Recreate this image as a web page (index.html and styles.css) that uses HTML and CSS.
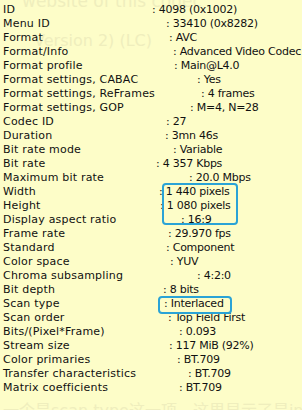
FILE: index.html
```html
<!DOCTYPE html>
<html>
<head>
<meta charset="utf-8">
<link rel="stylesheet" href="styles.css">
</head>
<body>
<div class="panel">
  <div class="ghost ghost-top">website of this codec</div>
  <div class="ghost ghost-ver">Version 2) (LC)</div>
  <div class="ghost ghost-cn">一个是scan type这一项，这里显示了是interlaced</div>
  <div class="rows">
    <div class="row"><span class="k">ID</span><span class="v" style="--x:1px">: 4098 (0x1002)</span></div>
    <div class="row"><span class="k">Menu ID</span><span class="v" style="--x:15px">: 33410 (0x8282)</span></div>
    <div class="row"><span class="k">Format</span><span class="v" style="--x:18px">: AVC</span></div>
    <div class="row"><span class="k">Format/Info</span><span class="v" style="--x:22px">: Advanced Video Codec</span></div>
    <div class="row"><span class="k">Format profile</span><span class="v" style="--x:23px">: Main@L4.0</span></div>
    <div class="row"><span class="k">Format settings, CABAC</span><span class="v" style="--x:46px">: Yes</span></div>
    <div class="row"><span class="k">Format settings, ReFrames</span><span class="v" style="--x:50px">: 4 frames</span></div>
    <div class="row"><span class="k">Format settings, GOP</span><span class="v" style="--x:39px">: M=4, N=28</span></div>
    <div class="row"><span class="k">Codec ID</span><span class="v" style="--x:15px">: 27</span></div>
    <div class="row"><span class="k">Duration</span><span class="v" style="--x:14px">: 3mn 46s</span></div>
    <div class="row"><span class="k">Bit rate mode</span><span class="v" style="--x:22px">: Variable</span></div>
    <div class="row"><span class="k">Bit rate</span><span class="v" style="--x:5px">: 4 357 Kbps</span></div>
    <div class="row"><span class="k">Maximum bit rate</span><span class="v" style="--x:38px">: 20.0 Mbps</span></div>
    <div class="row"><span class="k">Width</span><span class="v" style="--x:8px">: 1 440 pixels</span></div>
    <div class="row"><span class="k">Height</span><span class="v" style="--x:9px">: 1 080 pixels</span></div>
    <div class="row"><span class="k">Display aspect ratio</span><span class="v" style="--x:30px">: 16:9</span></div>
    <div class="row"><span class="k">Frame rate</span><span class="v" style="--x:17px">: 29.970 fps</span></div>
    <div class="row"><span class="k">Standard</span><span class="v" style="--x:15px">: Component</span></div>
    <div class="row"><span class="k">Color space</span><span class="v" style="--x:19px">: YUV</span></div>
    <div class="row"><span class="k">Chroma subsampling</span><span class="v" style="--x:46px">: 4:2:0</span></div>
    <div class="row"><span class="k">Bit depth</span><span class="v" style="--x:12px">: 8 bits</span></div>
    <div class="row"><span class="k">Scan type</span><span class="v" style="--x:13px">: Interlaced</span></div>
    <div class="row"><span class="k">Scan order</span><span class="v" style="--x:17px">: Top Field First</span></div>
    <div class="row"><span class="k">Bits/(Pixel*Frame)</span><span class="v" style="--x:28px">: 0.093</span></div>
    <div class="row"><span class="k">Stream size</span><span class="v" style="--x:18px">: 117 MiB (92%)</span></div>
    <div class="row"><span class="k">Color primaries</span><span class="v" style="--x:26px">: BT.709</span></div>
    <div class="row"><span class="k">Transfer characteristics</span><span class="v" style="--x:37px">: BT.709</span></div>
    <div class="row"><span class="k">Matrix coefficients</span><span class="v" style="--x:28px">: BT.709</span></div>
  </div>
  <div class="hl hl-size"></div>
  <div class="hl hl-scan"></div>
</div>
</body>
</html>
```

FILE: styles.css
```css
html, body {
  margin: 0;
  padding: 0;
}
body {
  width: 302px;
  height: 410px;
  overflow: hidden;
  background: #fdfdc8;
}
.panel {
  position: relative;
  width: 302px;
  height: 410px;
  overflow: hidden;
  font-family: "DejaVu Sans", sans-serif;
  font-size: 11px;
  color: #111;
}
.rows {
  position: relative;
  z-index: 1;
  padding: 3px 0 0 3px;
  display: flex;
  flex-direction: column;
}
.row {
  display: flex;
  height: 14px;
  line-height: 14px;
  white-space: nowrap;
}
.k {
  width: 148px;
  flex: none;
  letter-spacing: 0.2px;
}
.v {
  padding-left: var(--x);
  letter-spacing: -0.25px;
}
.hl {
  position: absolute;
  z-index: 2;
  border: 2.5px solid #2aa3d6;
  border-radius: 4px;
  box-sizing: border-box;
}
.hl-size {
  left: 162px;
  top: 183px;
  width: 76px;
  height: 42px;
}
.hl-scan {
  left: 158px;
  top: 296px;
  width: 74px;
  height: 18px;
}
.ghost {
  position: absolute;
  color: #efeebd;
  white-space: nowrap;
}
.ghost-top {
  left: 22px;
  top: -9px;
  font-size: 17px;
}
.ghost-ver {
  left: 34px;
  top: 31px;
  font-size: 16px;
}
.ghost-cn {
  left: 3px;
  top: 397px;
  font-size: 16px;
  font-family: "DejaVu Sans", "Noto Sans CJK SC", sans-serif;
}
```
